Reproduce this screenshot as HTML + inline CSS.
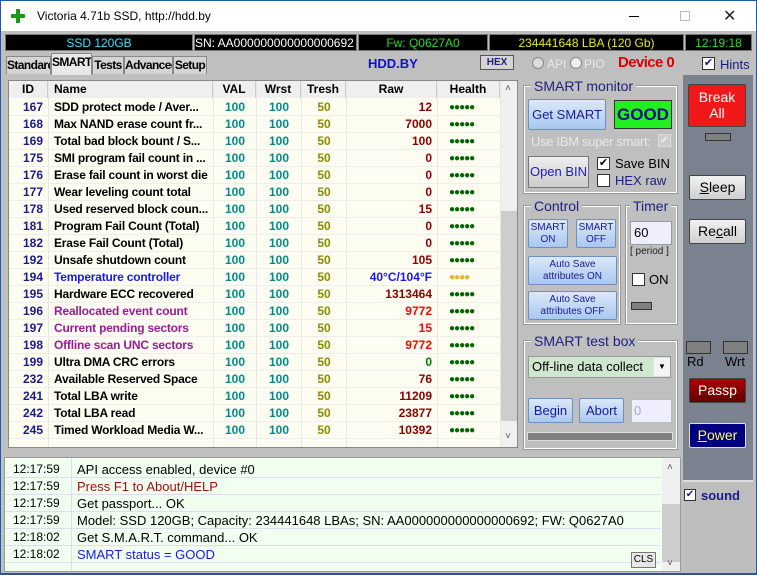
<!DOCTYPE html>
<html><head><meta charset="utf-8"><style>
*{box-sizing:border-box;margin:0;padding:0}
body{width:757px;height:575px;overflow:hidden;background:#1a5aa8;font-family:"Liberation Sans",sans-serif;font-size:12px;position:relative}
.a{position:absolute}
#win{left:1px;top:1px;width:755px;height:572px;background:#bfbfbf}
#title{left:1px;top:1px;width:755px;height:30px;background:#fff;color:#000;font-size:12px}
.blk{background:#000;top:34px;height:17px;font-size:12px;line-height:17px;text-align:center;border:1px solid #777}
.tab{top:56px;height:18px;background:#d4d4d4;border:1px solid #888;border-bottom:none;font-weight:bold;font-size:12px;letter-spacing:-0.6px;line-height:17px;text-align:center;color:#000;white-space:nowrap;overflow:hidden}
#tbl{left:8px;top:80px;width:510px;height:368px;background:#fdfdf2;border:1px solid #888;overflow:hidden}
.hd{top:0;height:17px;background:#efefef;border-right:1px solid #ccc;font-weight:bold;font-size:12px;line-height:17px;text-align:center}
.row{position:absolute;left:0;width:492px;height:17px;border-bottom:1px solid #eee;font-weight:bold;font-size:12px;line-height:17px}
.row span{position:absolute;top:0}
.c1{left:0;width:34px;text-align:right;color:#1a1a8a}
.c2{left:45px;white-space:nowrap;letter-spacing:-0.2px}
.c3{left:205px;width:42px;text-align:center;color:#008b8b}
.c4{left:248px;width:44px;text-align:center;color:#008b8b}
.c5{left:293px;width:44px;text-align:center;color:#8b8b00}
.c6{left:338px;width:85px;text-align:right;color:#8b0000}
.c7{left:440px;color:#006400;font-size:10px;letter-spacing:-1px}
.vl{position:absolute;top:0;width:1px;height:368px;background:#e6e6e6}
.grp{border:1px solid #fff;outline:1px solid #999}
.gl{background:#bfbfbf;color:#202080;font-size:14px;padding:0 3px;line-height:14px}
.btn{background:linear-gradient(#dbe8f8,#a9c8ef);border:1px solid #6d8fbf;color:#1b1b9a;text-align:center;border-radius:2px;white-space:nowrap}
.rb{border:1px solid #444;border-radius:2px;text-align:center;font-size:14px;line-height:22px}
.log{position:absolute;left:0;width:656px;height:17px;border-bottom:1px solid #dde;font-size:13px;line-height:17px}
.log b{font-weight:normal;position:absolute;left:8px;font-size:12px}
.log i{font-style:normal;position:absolute;left:72px;white-space:nowrap}
.ind{background:#808080;border:1px solid #333}
</style></head><body>
<div class="a" id="win"></div>
<div class="a" id="title">
 <div class="a" style="left:10px;top:13px;width:14px;height:4px;background:#1a9a1a"></div>
 <div class="a" style="left:15px;top:8px;width:4px;height:14px;background:#1a9a1a"></div>
 <div class="a" style="left:36px;top:8px;font-size:12px">Victoria 4.71b SSD, http://hdd.by</div>
 <div class="a" style="left:628px;top:15px;width:10px;height:1px;background:#000"></div>
 <div class="a" style="left:679px;top:10px;width:10px;height:10px;border:1px solid #bbb"></div>
 <div class="a" style="left:722px;top:5px;font-size:16px;color:#222">✕</div>
</div>
<div class="a" style="left:1px;top:31px;width:755px;height:22px;background:#bfbfbf"></div>
<div class="a blk" style="left:5px;width:188px;color:#40e0ff">SSD 120GB</div>
<div class="a blk" style="left:194px;width:163px;color:#fff;text-align:left;overflow:hidden;white-space:nowrap">SN: AA000000000000000692</div>
<div class="a blk" style="left:358px;width:130px;color:#20e020">Fw: Q0627A0</div>
<div class="a blk" style="left:489px;width:195px;color:#e8e820">234441648 LBA (120 Gb)</div>
<div class="a blk" style="left:685px;width:67px;color:#20e020">12:19:18</div>

<div class="a tab" style="left:6px;width:45px">Standard</div>
<div class="a tab" style="left:51px;top:53px;height:22px;width:41px;background:#e8e8e8">SMART</div>
<div class="a tab" style="left:92px;width:32px">Tests</div>
<div class="a tab" style="left:124px;width:49px">Advanced</div>
<div class="a tab" style="left:173px;width:34px">Setup</div>
<div class="a" style="left:368px;top:56px;color:#1010d0;font-weight:bold;font-size:13px">HDD.BY</div>
<div class="a" style="left:480px;top:55px;width:34px;height:15px;background:#d4d4d4;border:1px solid #555;font-size:10px;font-weight:bold;color:#202080;text-align:center;line-height:13px">HEX</div>
<div class="a" style="left:532px;top:57px;width:12px;height:12px;border-radius:50%;border:1px solid #888;background:#ddd"></div>
<div class="a" style="left:547px;top:57px;color:#e8e8e8;font-size:12px">API</div>
<div class="a" style="left:570px;top:57px;width:12px;height:12px;border-radius:50%;border:1px solid #888;background:#eee"></div>
<div class="a" style="left:584px;top:57px;color:#e8e8e8;font-size:12px">PIO</div>
<div class="a" style="left:618px;top:54px;color:#e00000;font-size:15px;font-weight:bold;letter-spacing:-0.6px">Device 0</div>
<div class="a" style="left:702px;top:57px;width:13px;height:13px;background:#fff;border:1px solid #333;color:#1a1a8a;font-size:11px;line-height:11px;text-align:center">✔</div>
<div class="a" style="left:720px;top:57px;color:#1a1a8a;font-size:13px">Hints</div>

<div class="a" id="tbl">
 <div class="a hd" style="left:0;width:39px">ID</div>
 <div class="a hd" style="left:39px;width:165px;text-align:left;padding-left:6px">Name</div>
 <div class="a hd" style="left:204px;width:43px">VAL</div>
 <div class="a hd" style="left:247px;width:45px">Wrst</div>
 <div class="a hd" style="left:292px;width:45px">Tresh</div>
 <div class="a hd" style="left:337px;width:91px">Raw</div>
 <div class="a hd" style="left:428px;width:63px">Health</div>
 <div class="a hd" style="left:491px;width:9px"></div>
 <div class="vl" style="left:39px"></div><div class="vl" style="left:204px"></div><div class="vl" style="left:247px"></div><div class="vl" style="left:292px"></div><div class="vl" style="left:337px"></div><div class="vl" style="left:428px"></div><div class="vl" style="left:491px"></div>
 <div class="a" style="left:492px;top:0;width:17px;height:368px;background:#f0f0f0"></div>
 <div class="a" style="left:492px;top:130px;width:17px;height:210px;background:#cdcdcd"></div>
 <div class="a" style="left:496px;top:2px;font-size:10px;color:#555">˄</div>
 <div class="a" style="left:496px;top:350px;font-size:10px;color:#555">˅</div>
 <div class="row" style="top:18px"><span class="c1">167</span><span class="c2">SDD protect mode / Aver...</span><span class="c3">100</span><span class="c4">100</span><span class="c5">50</span><span class="c6">12</span><span class="c7">●●●●●</span></div>
 <div class="row" style="top:35px"><span class="c1">168</span><span class="c2">Max NAND erase count fr...</span><span class="c3">100</span><span class="c4">100</span><span class="c5">50</span><span class="c6">7000</span><span class="c7">●●●●●</span></div>
 <div class="row" style="top:52px"><span class="c1">169</span><span class="c2">Total bad block bount / S...</span><span class="c3">100</span><span class="c4">100</span><span class="c5">50</span><span class="c6">100</span><span class="c7">●●●●●</span></div>
 <div class="row" style="top:69px"><span class="c1">175</span><span class="c2">SMI program fail count in ...</span><span class="c3">100</span><span class="c4">100</span><span class="c5">50</span><span class="c6">0</span><span class="c7">●●●●●</span></div>
 <div class="row" style="top:86px"><span class="c1">176</span><span class="c2">Erase fail count in worst die</span><span class="c3">100</span><span class="c4">100</span><span class="c5">50</span><span class="c6">0</span><span class="c7">●●●●●</span></div>
 <div class="row" style="top:103px"><span class="c1">177</span><span class="c2">Wear leveling count total</span><span class="c3">100</span><span class="c4">100</span><span class="c5">50</span><span class="c6">0</span><span class="c7">●●●●●</span></div>
 <div class="row" style="top:120px"><span class="c1">178</span><span class="c2">Used reserved block coun...</span><span class="c3">100</span><span class="c4">100</span><span class="c5">50</span><span class="c6">15</span><span class="c7">●●●●●</span></div>
 <div class="row" style="top:137px"><span class="c1">181</span><span class="c2">Program Fail Count (Total)</span><span class="c3">100</span><span class="c4">100</span><span class="c5">50</span><span class="c6">0</span><span class="c7">●●●●●</span></div>
 <div class="row" style="top:154px"><span class="c1">182</span><span class="c2">Erase Fail Count (Total)</span><span class="c3">100</span><span class="c4">100</span><span class="c5">50</span><span class="c6">0</span><span class="c7">●●●●●</span></div>
 <div class="row" style="top:171px"><span class="c1">192</span><span class="c2">Unsafe shutdown count</span><span class="c3">100</span><span class="c4">100</span><span class="c5">50</span><span class="c6">105</span><span class="c7">●●●●●</span></div>
 <div class="row" style="top:188px"><span class="c1">194</span><span class="c2" style="color:#1a1aee">Temperature controller</span><span class="c3">100</span><span class="c4">100</span><span class="c5">50</span><span class="c6" style="color:#1a1aee">40°C/104°F</span><span class="c7" style="color:#f0b030">●●●●</span></div>
 <div class="row" style="top:205px"><span class="c1">195</span><span class="c2">Hardware ECC recovered</span><span class="c3">100</span><span class="c4">100</span><span class="c5">50</span><span class="c6">1313464</span><span class="c7">●●●●●</span></div>
 <div class="row" style="top:222px"><span class="c1">196</span><span class="c2" style="color:#9a1a9a">Reallocated event count</span><span class="c3">100</span><span class="c4">100</span><span class="c5">50</span><span class="c6" style="color:#f00">9772</span><span class="c7">●●●●●</span></div>
 <div class="row" style="top:239px"><span class="c1">197</span><span class="c2" style="color:#9a1a9a">Current pending sectors</span><span class="c3">100</span><span class="c4">100</span><span class="c5">50</span><span class="c6" style="color:#f00">15</span><span class="c7">●●●●●</span></div>
 <div class="row" style="top:256px"><span class="c1">198</span><span class="c2" style="color:#9a1a9a">Offline scan UNC sectors</span><span class="c3">100</span><span class="c4">100</span><span class="c5">50</span><span class="c6" style="color:#f00">9772</span><span class="c7">●●●●●</span></div>
 <div class="row" style="top:273px"><span class="c1">199</span><span class="c2">Ultra DMA CRC errors</span><span class="c3">100</span><span class="c4">100</span><span class="c5">50</span><span class="c6" style="color:#008000">0</span><span class="c7">●●●●●</span></div>
 <div class="row" style="top:290px"><span class="c1">232</span><span class="c2">Available Reserved Space</span><span class="c3">100</span><span class="c4">100</span><span class="c5">50</span><span class="c6">76</span><span class="c7">●●●●●</span></div>
 <div class="row" style="top:307px"><span class="c1">241</span><span class="c2">Total LBA write</span><span class="c3">100</span><span class="c4">100</span><span class="c5">50</span><span class="c6">11209</span><span class="c7">●●●●●</span></div>
 <div class="row" style="top:324px"><span class="c1">242</span><span class="c2">Total LBA read</span><span class="c3">100</span><span class="c4">100</span><span class="c5">50</span><span class="c6">23877</span><span class="c7">●●●●●</span></div>
 <div class="row" style="top:341px"><span class="c1">245</span><span class="c2">Timed Workload Media W...</span><span class="c3">100</span><span class="c4">100</span><span class="c5">50</span><span class="c6">10392</span><span class="c7">●●●●●</span></div>
</div>

<!-- middle-right panel -->
<div class="a grp" style="left:524px;top:86px;width:153px;height:107px"></div>
<div class="a gl" style="left:531px;top:79px">SMART monitor</div>
<div class="a btn" style="left:528px;top:99px;width:78px;height:31px;font-size:13px;line-height:29px">Get SMART</div>
<div class="a" style="left:614px;top:100px;width:58px;height:29px;background:#20f020;border:1px solid #333;color:#101080;font-weight:bold;font-size:17px;text-align:center;line-height:28px">GOOD</div>
<div class="a" style="left:531px;top:134px;color:#e8e8e8;font-size:13px;letter-spacing:-0.3px">Use IBM super smart:</div>
<div class="a" style="left:658px;top:134px;width:13px;height:13px;border:1px solid #ddd;background:#ccc;color:#eee;font-size:10px;line-height:11px;text-align:center">✔</div>
<div class="a" style="left:528px;top:156px;width:61px;height:32px;background:linear-gradient(#eee,#ccc);border:1px solid #777;color:#1b1bd0;font-size:13px;text-align:center;line-height:30px;white-space:nowrap">Open BIN</div>
<div class="a" style="left:597px;top:157px;width:13px;height:13px;background:#fff;border:1px solid #333;font-size:11px;line-height:11px;text-align:center">✔</div>
<div class="a" style="left:615px;top:156px;font-size:13px">Save BIN</div>
<div class="a" style="left:597px;top:174px;width:13px;height:13px;background:#fff;border:1px solid #333"></div>
<div class="a" style="left:615px;top:173px;font-size:13px;color:#202080">HEX raw</div>

<div class="a grp" style="left:524px;top:206px;width:96px;height:118px"></div>
<div class="a gl" style="left:531px;top:199px">Control</div>
<div class="a btn" style="left:528px;top:219px;width:40px;height:29px;font-size:10px;line-height:12px;padding-top:2px">SMART<br>ON</div>
<div class="a btn" style="left:576px;top:219px;width:40px;height:29px;font-size:10px;line-height:12px;padding-top:2px">SMART<br>OFF</div>
<div class="a btn" style="left:528px;top:256px;width:89px;height:29px;font-size:10px;line-height:12px;padding-top:2px">Auto Save<br>attributes ON</div>
<div class="a btn" style="left:528px;top:291px;width:89px;height:29px;font-size:10px;line-height:12px;padding-top:2px">Auto Save<br>attributes OFF</div>
<div class="a grp" style="left:626px;top:206px;width:51px;height:118px"></div>
<div class="a gl" style="left:630px;top:199px">Timer</div>
<div class="a" style="left:630px;top:221px;width:42px;height:24px;background:#eef;border:1px solid #999;font-size:13px;line-height:22px;padding-left:3px">60</div>
<div class="a" style="left:630px;top:246px;font-size:10px;color:#222">[ period ]</div>
<div class="a" style="left:632px;top:273px;width:13px;height:13px;background:#fff;border:1px solid #333"></div>
<div class="a" style="left:649px;top:272px;font-size:13px">ON</div>
<div class="a ind" style="left:631px;top:302px;width:21px;height:8px"></div>

<div class="a grp" style="left:524px;top:341px;width:153px;height:108px"></div>
<div class="a gl" style="left:531px;top:334px">SMART test box</div>
<div class="a" style="left:528px;top:356px;width:143px;height:22px;background:#cfe6cf;border:1px solid #999;font-size:13px;line-height:20px;padding-left:3px">Off-line data collect</div>
<div class="a" style="left:654px;top:358px;width:16px;height:18px;background:#f4f4f4;font-size:8px;text-align:center;line-height:18px">▼</div>
<div class="a btn" style="left:528px;top:398px;width:45px;height:25px;font-size:13px;line-height:23px">Begin</div>
<div class="a btn" style="left:579px;top:398px;width:45px;height:25px;font-size:13px;line-height:23px">Abort</div>
<div class="a" style="left:631px;top:399px;width:41px;height:24px;background:#eef;border:1px solid #bbb;color:#aaa;font-size:13px;line-height:22px;padding-left:2px">0</div>
<div class="a" style="left:527px;top:432px;width:146px;height:9px;background:#808080;border:1px solid #ddd"></div>

<!-- right column -->
<div class="a" style="left:683px;top:75px;width:70px;height:405px;background:#7a8290"></div>
<div class="a" style="left:683px;top:480px;width:70px;height:92px;background:#bdbdbd;border-top:2px solid #ddd"></div>
<div class="a rb" style="left:688px;top:84px;width:58px;height:43px;background:#f01818;color:#fff;line-height:16px;padding-top:4px">Break<br>All</div>
<div class="a ind" style="left:705px;top:133px;width:26px;height:8px"></div>
<div class="a rb" style="left:689px;top:175px;width:57px;height:25px;background:linear-gradient(#f2f2f2,#cfcfcf);color:#000"><u>S</u>leep</div>
<div class="a rb" style="left:689px;top:219px;width:57px;height:25px;background:linear-gradient(#f2f2f2,#cfcfcf);color:#000">Re<u>c</u>all</div>
<div class="a ind" style="left:686px;top:341px;width:25px;height:13px"></div>
<div class="a ind" style="left:723px;top:341px;width:25px;height:13px"></div>
<div class="a" style="left:687px;top:354px;font-size:13px">Rd</div>
<div class="a" style="left:725px;top:354px;font-size:13px">Wrt</div>
<div class="a rb" style="left:689px;top:378px;width:57px;height:25px;background:linear-gradient(#b00000,#600000);color:#fff">Passp</div>
<div class="a rb" style="left:689px;top:423px;width:57px;height:25px;background:#000080;color:#ffff60;border-color:#ddd"><u>P</u>ower</div>
<div class="a" style="left:684px;top:489px;width:12px;height:12px;background:#fff;border:1px solid #333;color:#1a1a8a;font-size:10px;line-height:10px;text-align:center">✔</div>
<div class="a" style="left:701px;top:488px;font-size:13px;font-weight:bold;color:#1a1a8a">sound</div>

<!-- log -->
<div class="a" style="left:4px;top:457px;width:677px;height:115px;background:#f0fff0;border:1px solid #999;overflow:hidden">
 <div class="a" style="left:66px;top:0;width:1px;height:115px;background:#dde"></div>
 <div class="log" style="top:3px"><b>12:17:59</b><i>API access enabled, device #0</i></div>
 <div class="log" style="top:20px"><b>12:17:59</b><i style="color:#a01010">Press F1 to About/HELP</i></div>
 <div class="log" style="top:37px"><b>12:17:59</b><i>Get passport... OK</i></div>
 <div class="log" style="top:54px"><b>12:17:59</b><i>Model: SSD 120GB; Capacity: 234441648 LBAs; SN: AA000000000000000692; FW: Q0627A0</i></div>
 <div class="log" style="top:71px"><b>12:18:02</b><i>Get S.M.A.R.T. command... OK</i></div>
 <div class="log" style="top:88px"><b>12:18:02</b><i style="color:#1a1aee">SMART status = GOOD</i></div>
 <div class="a" style="left:626px;top:94px;width:25px;height:16px;background:#e8e8e8;border:1px solid #777;font-size:10px;text-align:center;line-height:14px">CLS</div>
 <div class="a" style="left:657px;top:0;width:19px;height:115px;background:#f0f0f0"></div>
 <div class="a" style="left:657px;top:46px;width:19px;height:58px;background:#cdcdcd"></div>
 <div class="a" style="left:662px;top:4px;font-size:10px;color:#555">˄</div>
 <div class="a" style="left:662px;top:100px;font-size:10px;color:#555">˅</div>
</div>
</body></html>
